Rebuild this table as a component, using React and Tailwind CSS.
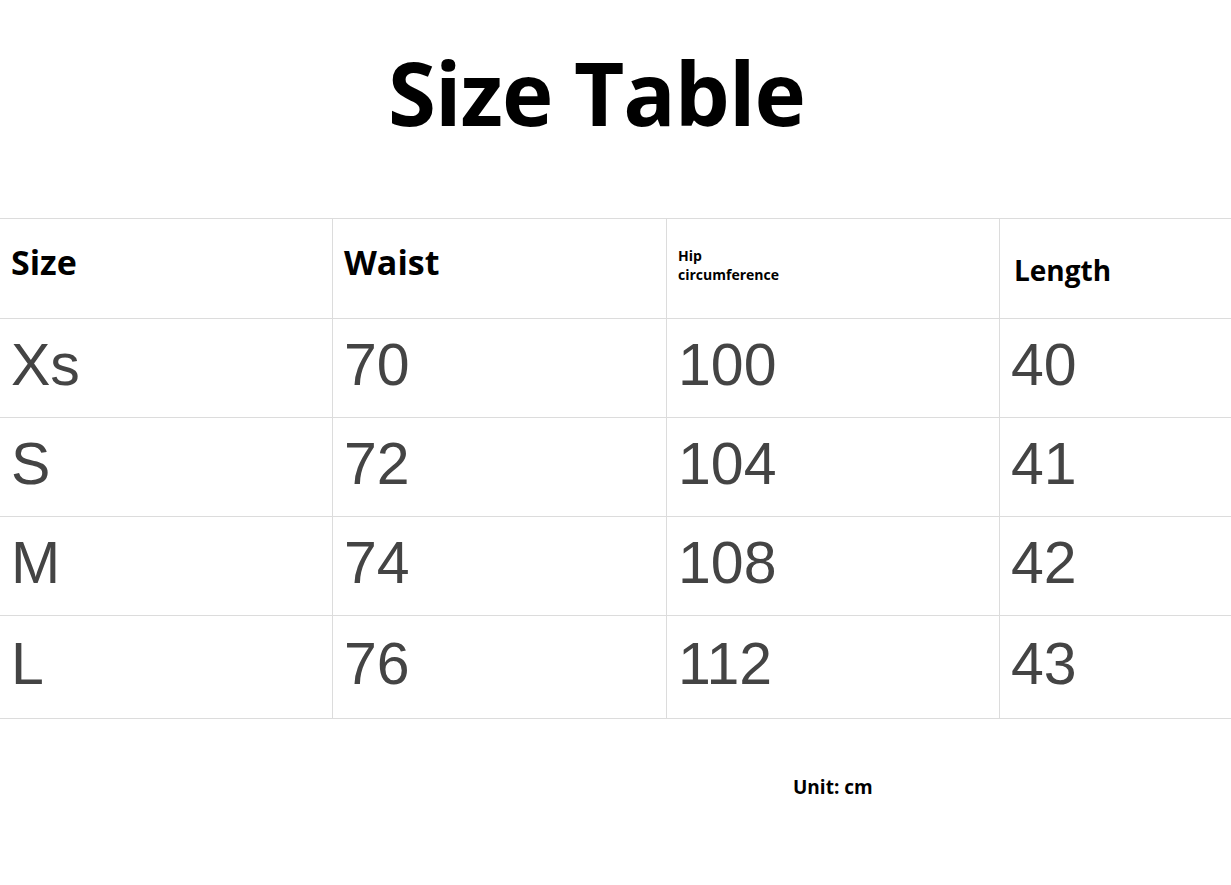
const headers = ['Size', 'Waist', 'Hip circumference', 'Length']

const rows = [
    ['Xs', '70', '100', '40'],
    ['S', '72', '104', '41'],
    ['M', '74', '108', '42'],
    ['L', '76', '112', '43'],
]

const bold = { fontFamily: '"Open Sans", "Noto Sans", sans-serif' }

const App = () => {
    return (
        <div className="w-[1231px] h-[885px] bg-white overflow-hidden">
            <div className="h-[218px] flex pl-[388px] pt-[49px]">
                <h1 className="text-[87px] font-bold leading-none tracking-[-1px] text-black" style={bold}>Size Table</h1>
            </div>

            <div className="grid grid-cols-[333px_334px_333px_1fr] border-t border-[#dcdcdc]" style={bold}>
                {headers.map((h, i) => (
                    <div key={h} className={`h-[100px] border-b border-[#dcdcdc] flex items-center ${i === 3 ? 'pl-[14px]' : 'pl-[11px]'} ${i < 3 ? 'border-r' : ''}`}>
                        {h === 'Hip circumference' ? (
                            <div className="text-[14px] font-bold leading-[19px] text-black -mt-[8px]">Hip<br />circumference</div>
                        ) : (
                            <span className={`font-bold text-black leading-none ${i === 3 ? 'text-[28px] mt-[2px]' : 'text-[34px] -mt-[14px]'}`}>{h}</span>
                        )}
                    </div>
                ))}
                {rows.map((r, ri) => r.map((c, ci) => (
                    <div key={ri + '-' + ci}
                        className={`${ri === 3 ? 'h-[103px]' : 'h-[99px]'} border-b border-[#dcdcdc] flex items-center pl-[11px] ${ci < 3 ? 'border-r' : ''}`}
                        style={{ fontFamily: '"Liberation Sans", Arial, sans-serif' }}>
                        <span className="text-[59px] leading-none text-[#444444] -mt-[6px]">{c}</span>
                    </div>
                )))}
            </div>

            <div className="flex pl-[793px] pt-[59px]">
                <span className="text-[19px] font-bold text-black leading-none" style={bold}>Unit: cm</span>
            </div>
        </div>
    )
}

export default App
